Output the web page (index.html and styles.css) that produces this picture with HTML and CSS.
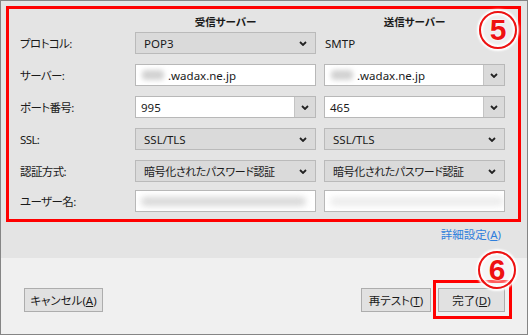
FILE: index.html
```html
<!DOCTYPE html>
<html lang="ja">
<head>
  <meta charset="UTF-8" />
  <title>アカウント設定</title>
  <link rel="stylesheet" href="styles.css">
</head>
<body>
  <div class="window">
    <div class="main">
      <div class="settings">
        <div class="grid">
          <div></div>
          <div class="head">受信サーバー</div>
          <div class="head">送信サーバー</div>

          <div class="label">プロトコル:</div>
          <div class="field select"><span>POP3</span><span class="chev"><svg width="8" height="5" viewBox="0 0 8 5"><path d="M1 1 L4 4 L7 1" fill="none" stroke="#222" stroke-width="1.8"/></svg></span></div>
          <div class="plain">SMTP</div>

          <div class="label">サーバー:</div>
          <div class="field input"><span class="blur"></span><span>.wadax.ne.jp</span></div>
          <div class="field input combo"><span class="blur"></span><span>.wadax.ne.jp</span><span class="drop"><svg width="8" height="5" viewBox="0 0 8 5"><path d="M1 1 L4 4 L7 1" fill="none" stroke="#222" stroke-width="1.8"/></svg></span></div>

          <div class="label">ポート番号:</div>
          <div class="field input combo"><span>995</span><span class="drop"><svg width="8" height="5" viewBox="0 0 8 5"><path d="M1 1 L4 4 L7 1" fill="none" stroke="#222" stroke-width="1.8"/></svg></span></div>
          <div class="field input combo"><span>465</span><span class="drop"><svg width="8" height="5" viewBox="0 0 8 5"><path d="M1 1 L4 4 L7 1" fill="none" stroke="#222" stroke-width="1.8"/></svg></span></div>

          <div class="label">SSL:</div>
          <div class="field select"><span>SSL/TLS</span><span class="chev"><svg width="8" height="5" viewBox="0 0 8 5"><path d="M1 1 L4 4 L7 1" fill="none" stroke="#222" stroke-width="1.8"/></svg></span></div>
          <div class="field select"><span>SSL/TLS</span><span class="chev"><svg width="8" height="5" viewBox="0 0 8 5"><path d="M1 1 L4 4 L7 1" fill="none" stroke="#222" stroke-width="1.8"/></svg></span></div>

          <div class="label">認証方式:</div>
          <div class="field select"><span class="jp">暗号化されたパスワード認証</span><span class="chev"><svg width="8" height="5" viewBox="0 0 8 5"><path d="M1 1 L4 4 L7 1" fill="none" stroke="#222" stroke-width="1.8"/></svg></span></div>
          <div class="field select"><span class="jp">暗号化されたパスワード認証</span><span class="chev"><svg width="8" height="5" viewBox="0 0 8 5"><path d="M1 1 L4 4 L7 1" fill="none" stroke="#222" stroke-width="1.8"/></svg></span></div>

          <div class="label">ユーザー名:</div>
          <div class="field input"><span class="smudge"></span></div>
          <div class="field input"><span class="smudge light"></span></div>
        </div>
      </div>
      <div class="advanced"><a href="#">詳細設定(<u>A</u>)</a></div>
      <span class="marker m5">5</span>
    </div>
    <div class="footer">
      <button class="btn cancel">キャンセル(<u>A</u>)</button>
      <div class="actions">
        <button class="btn retest">再テスト(<u>T</u>)</button>
        <div class="done-wrap">
          <button class="btn done">完了(<u>D</u>)</button>
          <span class="highlight"></span>
          <span class="marker m6">6</span>
        </div>
      </div>
    </div>
  </div>
</body>
</html>
```

FILE: styles.css
```css
* { box-sizing: border-box; }
body {
  margin: 0;
  font-family: "Noto Sans", "Noto Sans CJK JP", sans-serif;
  font-feature-settings: "palt";
  font-size: 11px;
  color: #1a1a1a;
}
.window {
  width: 528px; height: 335px;
  border: 1px solid #858585;
  position: relative;
  display: flex; flex-direction: column;
}
.main {
  height: 257px; background: #e4e4e4;
  padding: 5px 6px 0 5px;
}
.settings {
  border: 3px solid #ff0000;
  height: 216px;
  padding-left: 11px;
}
.grid {
  display: grid;
  grid-template-columns: 107px 181px 181px;
  grid-template-rows: 23px repeat(4, 32px) 30px 1fr;
  column-gap: 8px;
  height: 100%;
}
.head {
  align-self: center; text-align: center;
  font-size: 10.5px; font-weight: 700; padding-top: 2px;
}
.label, .plain {
  height: 22px; display: flex; align-items: center;
}
.label { font-size: 11.5px; letter-spacing: -0.6px; }
.plain { padding-left: 1px; font-size: 11.5px; }
.field {
  height: 22px; border: 1px solid #bababa;
  display: flex; align-items: center;
  white-space: nowrap; overflow: hidden;
  font-size: 11.5px;
}
.jp { font-size: 11px; letter-spacing: -0.4px; }
.select { background: #dadada; padding-left: 8px; }
.chev { margin-left: auto; margin-right: 8px; display: flex; }
.input { background: #fff; padding-left: 5px; border-color: #b8b8b8; }
.drop {
  margin-left: auto; width: 21px; height: 100%;
  background: #dadada; border-left: 1px solid #c4c4c4;
  display: flex; align-items: center; justify-content: center;
}
.blur {
  width: 22px; height: 10px; margin: 0 4px 0 1px;
  background: #d2d2d2; border-radius: 4px; filter: blur(2.5px);
}
.smudge {
  width: 165px; height: 9px; border-radius: 5px;
  background: #d8d8d8; filter: blur(3px);
}
.smudge.light { background: #ececec; width: 175px; }
.advanced {
  display: flex; justify-content: flex-end;
  padding: 4px 20px 0 0;
}
.advanced a { color: #2f7fdc; text-decoration: none; font-size: 11.5px; }
.footer {
  flex: 1; background: #f0f0f0;
  display: flex; justify-content: space-between; align-items: flex-start;
  padding: 30px 22px 0 23px;
}
.actions { display: flex; gap: 7px; }
.btn {
  height: 24px; background: #e1e1e1;
  border: 1px solid #adadad; border-radius: 0;
  font: inherit; font-size: 11.5px; color: #1a1a1a;
  padding: 0; cursor: pointer;
}
.cancel { width: 79px; }
.retest { width: 70px; }
.done { width: 67px; }
.done-wrap { position: relative; }
.highlight {
  position: absolute; left: -5px; top: -8px;
  width: 79px; height: 39px;
  border: 3px solid #ff0000;
}
.marker {
  position: absolute;
  width: 38px; height: 38px; border-radius: 50%;
  border: 2px solid #ee1111;
  background: rgba(255,255,255,0.35);
  box-shadow: 0 0 2px 2px #fff, inset 0 0 2px 2px #fff;
  color: #ee1111;
  font-family: "Liberation Sans", sans-serif;
  font-weight: 700; font-size: 30px; line-height: 34px;
  text-align: center;
  text-shadow: 0 0 2px #fff, 0 0 2px #fff;
}
.m5 { left: 478px; top: 10px; }
.m6 { left: 40px; top: -37px; }
```
